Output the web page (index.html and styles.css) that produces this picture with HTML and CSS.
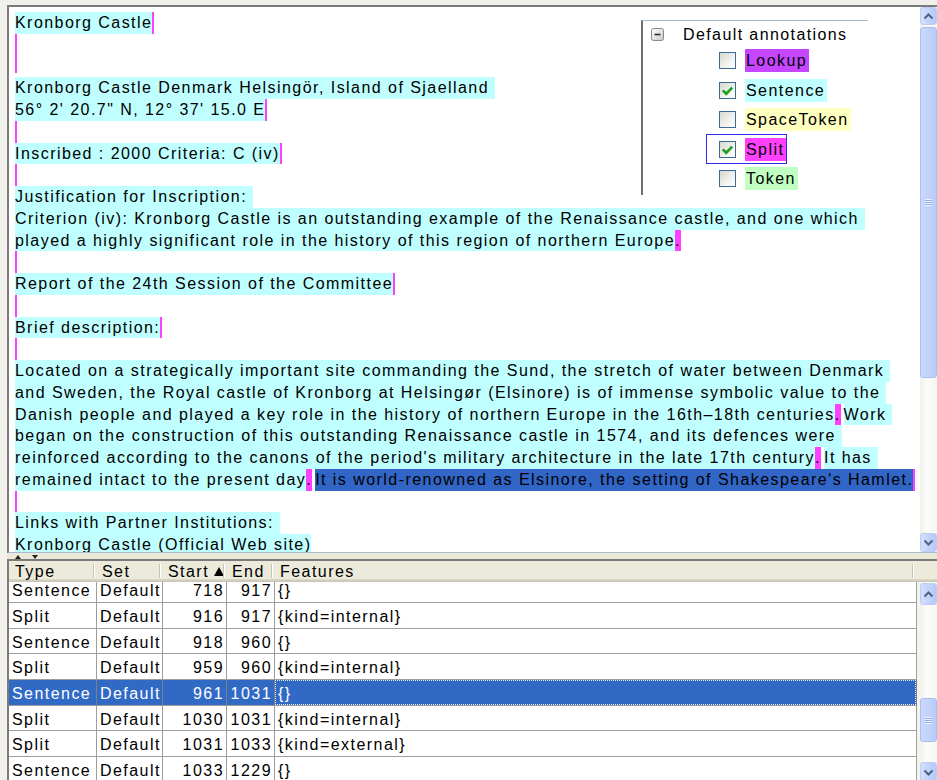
FILE: index.html
```html
<!DOCTYPE html>
<html lang="en">
<head>
<meta charset="utf-8">
<title>Document editor</title>
<link rel="stylesheet" href="styles.css">
</head>
<body>
<div class="window">
  <div class="editor">
    <div class="doc">
      <div class="ln"><span class="s">Kronborg Castle</span><span class="bar"></span></div>
      <div class="ln"><span class="bar"></span></div>
      <div class="ln"><span class="bar short"></span></div>
      <div class="ln"><span class="s">Kronborg Castle Denmark Helsingör, Island of Sjaelland </span></div>
      <div class="ln"><span class="s">56° 2' 20.7" N, 12° 37' 15.0 E</span><span class="bar"></span></div>
      <div class="ln"><span class="bar"></span></div>
      <div class="ln"><span class="s">Inscribed : 2000 Criteria: C (iv)</span><span class="bar"></span></div>
      <div class="ln"><span class="bar"></span></div>
      <div class="ln"><span class="s">Justification for Inscription: </span></div>
      <div class="ln"><span class="s">Criterion (iv): Kronborg Castle is an outstanding example of the Renaissance castle, and one which </span></div>
      <div class="ln"><span class="s">played a highly significant role in the history of this region of northern Europe</span><span class="p">.</span></div>
      <div class="ln"><span class="bar"></span></div>
      <div class="ln"><span class="s">Report of the 24th Session of the Committee</span><span class="bar"></span></div>
      <div class="ln"><span class="bar"></span></div>
      <div class="ln"><span class="s">Brief description:</span><span class="bar"></span></div>
      <div class="ln"><span class="bar"></span></div>
      <div class="ln"><span class="s">Located on a strategically important site commanding the Sund, the stretch of water between Denmark </span></div>
      <div class="ln"><span class="s">and Sweden, the Royal castle of Kronborg at Helsingør (Elsinore) is of immense symbolic value to the </span></div>
      <div class="ln"><span class="s">Danish people and played a key role in the history of northern Europe in the 16th–18th centuries</span><span class="p">.</span><span class="s next">Work </span></div>
      <div class="ln"><span class="s">began on the construction of this outstanding Renaissance castle in 1574, and its defences were </span></div>
      <div class="ln"><span class="s">reinforced according to the canons of the period's military architecture in the late 17th century</span><span class="p">.</span><span class="s next">It has </span></div>
      <div class="ln"><span class="s">remained intact to the present day</span><span class="p">.</span><span class="sel">It is world-renowned as Elsinore, the setting of Shakespeare's Hamlet.</span><span class="bar"></span></div>
      <div class="ln"><span class="bar"></span></div>
      <div class="ln"><span class="s">Links with Partner Institutions: </span></div>
      <div class="ln"><span class="s">Kronborg Castle (Official Web site)</span></div>
    </div>

    <div class="sb sb-doc">
      <div class="sb-btn"><svg width="15" height="15" viewBox="0 0 15 15"><path d="M3.5 9.5 L7.5 5.5 L11.5 9.5" fill="none" stroke="#4d6185" stroke-width="2"/></svg></div>
      <div class="sb-thumb"><span class="grip"></span></div>
      <div class="sb-fill"></div>
      <div class="sb-btn"><svg width="15" height="15" viewBox="0 0 15 15"><path d="M3.5 5.5 L7.5 9.5 L11.5 5.5" fill="none" stroke="#4d6185" stroke-width="2"/></svg></div>
    </div>

    <div class="legend">
      <div class="tree-root">
        <svg class="minus" width="13" height="13" viewBox="0 0 13 13">
          <defs><linearGradient id="mg" x1="0" y1="0" x2="1" y2="1"><stop offset="0" stop-color="#ffffff"/><stop offset="1" stop-color="#c9c9c0"/></linearGradient></defs>
          <rect x="0.5" y="0.5" width="12" height="12" rx="2" fill="url(#mg)" stroke="#7d8a9b"/>
          <path d="M3.5 6.5 H9.5" stroke="#2b2b2b" stroke-width="1.6"/>
        </svg>
        <span class="root-label">Default annotations</span>
      </div>
      <div class="item"><div class="opt"><span class="cb"></span><span class="tag lookup">Lookup</span></div></div>
      <div class="item"><div class="opt"><span class="cb"><svg width="15" height="15" viewBox="0 0 15 15"><path d="M2.8 7.4 L6.2 10.8 L12.2 4.6" fill="none" stroke="#21a121" stroke-width="2.7"/></svg></span><span class="tag sentence">Sentence</span></div></div>
      <div class="item"><div class="opt"><span class="cb"></span><span class="tag space">SpaceToken</span></div></div>
      <div class="item"><div class="opt focused"><span class="cb"><svg width="15" height="15" viewBox="0 0 15 15"><path d="M2.8 7.4 L6.2 10.8 L12.2 4.6" fill="none" stroke="#21a121" stroke-width="2.7"/></svg></span><span class="tag split">Split</span></div></div>
      <div class="item"><div class="opt"><span class="cb"></span><span class="tag token">Token</span></div></div>
    </div>
  </div>

  <div class="splitter"><span class="arr-up"></span><span class="arr-down"></span></div>

  <div class="table">
    <div class="thead">
      <div class="th c-type">Type</div>
      <div class="th c-set">Set</div>
      <div class="th c-start">Start<span class="sort"></span></div>
      <div class="th c-end">End</div>
      <div class="th c-feat">Features</div>
      <div class="th-rest"></div>
    </div>
    <div class="tbody">
      <div class="grid">
        <div class="row first"><div>Sentence</div><div>Default</div><div class="num">718</div><div class="num">917</div><div>{}</div></div>
        <div class="row"><div>Split</div><div>Default</div><div class="num">916</div><div class="num">917</div><div>{kind=internal}</div></div>
        <div class="row"><div>Sentence</div><div>Default</div><div class="num">918</div><div class="num">960</div><div>{}</div></div>
        <div class="row"><div>Split</div><div>Default</div><div class="num">959</div><div class="num">960</div><div>{kind=internal}</div></div>
        <div class="row selected"><div>Sentence</div><div>Default</div><div class="num">961</div><div class="num">1031</div><div class="focus-cell">{}</div></div>
        <div class="row"><div>Split</div><div>Default</div><div class="num">1030</div><div class="num">1031</div><div>{kind=internal}</div></div>
        <div class="row"><div>Split</div><div>Default</div><div class="num">1031</div><div class="num">1033</div><div>{kind=external}</div></div>
        <div class="row"><div>Sentence</div><div>Default</div><div class="num">1033</div><div class="num">1229</div><div>{}</div></div>
      </div>
      <div class="gutter"></div>
      <div class="sb sb-table">
        <div class="sb-btn"><svg width="15" height="15" viewBox="0 0 15 15"><path d="M3.5 9.5 L7.5 5.5 L11.5 9.5" fill="none" stroke="#4d6185" stroke-width="2"/></svg></div>
        <div class="sb-gap"></div>
        <div class="sb-thumb"><span class="grip"></span></div>
        <div class="sb-fill"></div>
        <div class="sb-btn"><svg width="15" height="15" viewBox="0 0 15 15"><path d="M3.5 5.5 L7.5 9.5 L11.5 5.5" fill="none" stroke="#4d6185" stroke-width="2"/></svg></div>
      </div>
    </div>
  </div>
</div>
</body>
</html>
```

FILE: styles.css
```css
html, body {
  margin: 0;
  padding: 0;
}

body {
  width: 937px;
  height: 780px;
  overflow: hidden;
  background: #f1f0ea;
  font-family: "Liberation Sans", Arial, sans-serif;
  font-size: 16px;
  letter-spacing: 1.45px;
  color: #000;
}

.window {
  display: flex;
  flex-direction: column;
  height: 780px;
  padding: 5px 0 0 7px;
  box-sizing: border-box;
}

/* ---------- document pane ---------- */
.editor {
  position: relative;
  display: flex;
  height: 548px;
  flex: none;
  border-top: 2px solid #7b7b7b;
  border-left: 2px solid #7b7b7b;
  border-bottom: 1px solid #a9bcd6;
  background: #fff;
  box-sizing: border-box;
}

.doc {
  flex: 1;
  min-width: 0;
  padding: 5px 0 0 6px;
  overflow: hidden;
}

.ln {
  height: 21.75px;
  line-height: 21.75px;
  white-space: pre;
  overflow: hidden;
}

.ln > span {
  display: inline-block;
  height: 21.75px;
  vertical-align: top;
}

.s { background: #c0ffff; }
.s.next { margin-left: 3px; }
.p { background: #ff40ff; }
.sel { background: #3166c6; margin-left: 3px; }

.bar {
  width: 2px;
  background: #ff40ff;
}
.ln > .bar.short { height: 17px; }

/* ---------- annotation sets legend ---------- */
.legend {
  position: absolute;
  left: 632px;
  top: 13px;
  width: 227px;
  height: 175px;
  background: #fff;
  border-top: 1px solid #a2b6cc;
  border-left: 2px solid #6e6e6e;
  box-sizing: border-box;
}

.tree-root {
  display: flex;
  align-items: center;
  height: 23px;
  margin-top: 2px;
  padding-left: 8px;
}

.minus { flex: none; }

.root-label {
  margin-left: 19px;
  letter-spacing: 1.4px;
}

.item {
  height: 29.5px;
  display: flex;
  align-items: center;
}

.opt {
  display: inline-flex;
  align-items: center;
  height: 28px;
  margin-left: 63px;
  padding-left: 12px;
  border: 1px solid transparent;
}

.opt.focused { border-color: #2b2bf2; }

.cb {
  width: 17px;
  height: 17px;
  box-sizing: border-box;
  border: 1px solid #3d6a96;
  background: linear-gradient(135deg, #d8d8d2 0%, #f2f2ee 60%, #ffffff 100%);
  display: inline-flex;
  align-items: center;
  justify-content: center;
}

.tag {
  margin-left: 9px;
  height: 23px;
  line-height: 23px;
  padding-left: 1px;
  padding-right: 2px;
}

.lookup { background: #c646ff; }
.sentence { background: #c0ffff; }
.space { background: #ffffc0; }
.split { background: #ff40ff; }
.token { background: #c0ffc0; }

/* ---------- scrollbars ---------- */
.sb {
  width: 17px;
  flex: none;
  display: flex;
  flex-direction: column;
  background: linear-gradient(to right, #f1efe8, #fdfdfb 40%, #f7f6f1);
}

.sb-btn {
  height: 18px;
  flex: none;
  box-sizing: border-box;
  border: 1px solid #bccdf3;
  border-radius: 3px;
  background: linear-gradient(to right, #d4e0fd, #c2d3fc 50%, #b5c9f7);
  display: flex;
  align-items: center;
  justify-content: center;
}

.sb-thumb {
  flex: none;
  box-sizing: border-box;
  border: 1px solid #a9bff1;
  border-radius: 3px;
  background: linear-gradient(to right, #cbd9fd, #c1d2fc 50%, #b8cbf8);
  display: flex;
  align-items: center;
  justify-content: center;
}

.grip {
  width: 7px;
  height: 7px;
  background: repeating-linear-gradient(to bottom, #eef3fe 0, #eef3fe 1px, #8fadea 1px, #8fadea 2px);
}

.sb-fill { flex: 1; }

.sb-doc .sb-btn:first-child { height: 18px; }
.sb-doc .sb-thumb { margin-top: 2px; height: 351px; }
.sb-doc .sb-btn:last-child { height: 19px; }

.sb-table .sb-btn:first-child { height: 22px; margin-top: 1px; }
.sb-table .sb-gap { height: 93px; flex: none; }
.sb-table .sb-thumb { height: 44px; }
.sb-table .sb-btn:last-child { height: 20px; margin-bottom: -2px; }

/* ---------- split bar ---------- */
.splitter {
  height: 6px;
  flex: none;
  background: #ece9d8;
  display: flex;
  align-items: flex-start;
  padding: 2px 0 0 8px;
  box-sizing: border-box;
}

.arr-up {
  width: 0;
  height: 0;
  border-left: 3px solid transparent;
  border-right: 3px solid transparent;
  border-bottom: 4px solid #222;
}

.arr-down {
  width: 0;
  height: 0;
  margin-left: 11px;
  border-left: 3.5px solid transparent;
  border-right: 3.5px solid transparent;
  border-top: 4px solid #222;
}

/* ---------- annotation table ---------- */
.table {
  flex: 1;
  min-height: 0;
  display: flex;
  flex-direction: column;
  border-top: 2px solid #7b7b7b;
  border-left: 2px solid #7b7b7b;
}

.thead {
  height: 21px;
  flex: none;
  display: flex;
  background: linear-gradient(to bottom, #ebeadb 0, #ebeadb 84%, #e2dfcf 84%, #d3cfbf 92%, #c8c4b4 100%);
}

.th {
  position: relative;
  box-sizing: border-box;
  padding-left: 5px;
  line-height: 20px;
  white-space: nowrap;
  display: flex;
  align-items: center;
}

.th::after {
  content: "";
  position: absolute;
  right: 3px;
  top: 3px;
  height: 14px;
  width: 1px;
  background: #c7c4b1;
  box-shadow: 1px 0 0 #ffffff;
}

.c-type { width: 88px; padding-left: 6px; }
.c-set { width: 66px; }
.c-start { width: 64px; }
.c-end { width: 48px; }
.c-feat { width: 642px; }
.c-feat::after { right: 4px; }
.th-rest { flex: 1; }

.sort {
  width: 0;
  height: 0;
  margin-left: 5px;
  border-left: 5px solid transparent;
  border-right: 5px solid transparent;
  border-bottom: 9px solid #000;
}

.tbody {
  flex: 1;
  min-height: 0;
  display: flex;
}

.grid {
  width: 908px;
  flex: none;
  background: #fff;
  overflow: hidden;
}

.gutter {
  width: 3px;
  flex: none;
  background: #f4f3ee;
}

.row {
  display: grid;
  grid-template-columns: 88px 66px 64px 48px 642px;
  height: 25.67px;
}

.row.first { margin-top: -4.67px; }

.row > div {
  box-sizing: border-box;
  border-right: 1px solid #9d9d9d;
  border-bottom: 1px solid #9d9d9d;
  padding: 2px 0 0 3px;
  line-height: 23px;
  white-space: nowrap;
  overflow: hidden;
}

.row > .num {
  text-align: right;
  padding-right: 2px;
  padding-left: 0;
}

.row.selected > div {
  background: #316ac5;
  color: #fff;
  border-right-color: #7f7f7f;
}

.row.selected > .focus-cell {
  position: relative;
}

.row.selected > .focus-cell::after {
  content: "";
  position: absolute;
  left: 0;
  top: 0;
  right: 0;
  bottom: 0;
  border: 1px dotted #e3ebfb;
}
```
